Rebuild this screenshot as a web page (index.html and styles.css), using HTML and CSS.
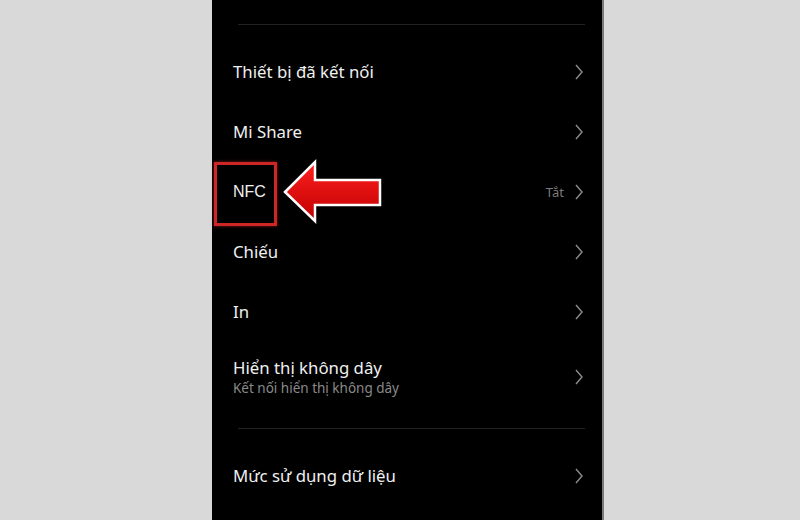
FILE: index.html
```html
<!DOCTYPE html>
<html lang="vi">
<head>
<meta charset="utf-8">
<link rel="stylesheet" href="styles.css">
</head>
<body>
<div class="stage">
  <div class="phone">
    <div class="divider top"></div>
    <div class="list">
      <div class="row"><span class="title">Thiết bị đã kết nối</span><span class="chev"><svg width="8" height="16" viewBox="0 0 8 16"><polyline points="1,1 7,8 1,15"/></svg></span></div>
      <div class="row"><span class="title">Mi Share</span><span class="chev"><svg width="8" height="16" viewBox="0 0 8 16"><polyline points="1,1 7,8 1,15"/></svg></span></div>
      <div class="row"><span class="title nfc">NFC</span><span class="value">Tắt</span><span class="chev"><svg width="8" height="16" viewBox="0 0 8 16"><polyline points="1,1 7,8 1,15"/></svg></span></div>
      <div class="row"><span class="title">Chiếu</span><span class="chev"><svg width="8" height="16" viewBox="0 0 8 16"><polyline points="1,1 7,8 1,15"/></svg></span></div>
      <div class="row"><span class="title">In</span><span class="chev"><svg width="8" height="16" viewBox="0 0 8 16"><polyline points="1,1 7,8 1,15"/></svg></span></div>
      <div class="row tall"><span class="stack"><span class="title">Hiển thị không dây</span><span class="sub">Kết nối hiển thị không dây</span></span><span class="chev"><svg width="8" height="16" viewBox="0 0 8 16"><polyline points="1,1 7,8 1,15"/></svg></span></div>
    </div>
    <div class="divider mid"></div>
    <div class="list">
      <div class="row"><span class="title">Mức sử dụng dữ liệu</span><span class="chev"><svg width="8" height="16" viewBox="0 0 8 16"><polyline points="1,1 7,8 1,15"/></svg></span></div>
    </div>
    <div class="highlight"></div>
    <svg class="arrow" width="104" height="68" viewBox="280 158 104 68">
      <defs>
        <linearGradient id="rg" x1="0" y1="0" x2="0" y2="1">
          <stop offset="0" stop-color="#ff2020"/>
          <stop offset="1" stop-color="#c00000"/>
        </linearGradient>
      </defs>
      <polygon points="285,192 315,162 315,180 380,180 380,205 315,205 315,221" fill="url(#rg)" stroke="#ffffff" stroke-width="2.5" stroke-linejoin="miter"/>
    </svg>
  </div>
</div>
</body>
</html>
```
FILE: styles.css
```css
html, body {
  margin: 0;
  padding: 0;
  background: #d9d9d9;
}
.stage {
  width: 800px;
  height: 520px;
  overflow: hidden;
  display: flex;
}
.phone {
  position: relative;
  margin-left: 212px;
  width: 390px;
  height: 520px;
  background: #000;
  border-right: 2px solid #7a7a7a;
  display: flex;
  flex-direction: column;
  font-family: "Noto Sans", "Open Sans", sans-serif;
  color: #f0f0f0;
}
.divider {
  height: 1px;
  background: #222;
  margin: 0 17px 0 26px;
}
.divider.top {
  margin-top: 24px;
  margin-bottom: 17px;
}
.divider.mid {
  margin-top: 16px;
  margin-bottom: 17px;
}
.list {
  display: flex;
  flex-direction: column;
}
.row {
  height: 60px;
  display: flex;
  align-items: center;
  padding: 0 19px 0 21px;
}
.row.tall {
  height: 70px;
}
.title {
  font-size: 16.8px;
  line-height: 22px;
  flex: 1;
}
.title.nfc {
  font-family: "Liberation Sans", Arial, sans-serif;
  font-size: 16px;
}
.stack {
  flex: 1;
  display: flex;
  flex-direction: column;
}
.sub {
  font-size: 13.5px;
  line-height: 18px;
  color: #8a8a8a;
}
.value {
  font-size: 13px;
  color: #7a7a7a;
  margin-right: 11px;
}
.chev {
  display: flex;
  width: 8px;
}
.chev polyline {
  fill: none;
  stroke: #8c8c8c;
  stroke-width: 1.4;
}
.highlight {
  position: absolute;
  left: 2px;
  top: 162px;
  width: 57px;
  height: 58px;
  border: 3px solid #cc2626;
  box-shadow: 0 0 3px rgba(220, 40, 40, 0.6);
}
.arrow {
  position: absolute;
  left: 68px;
  top: 158px;
}
```
